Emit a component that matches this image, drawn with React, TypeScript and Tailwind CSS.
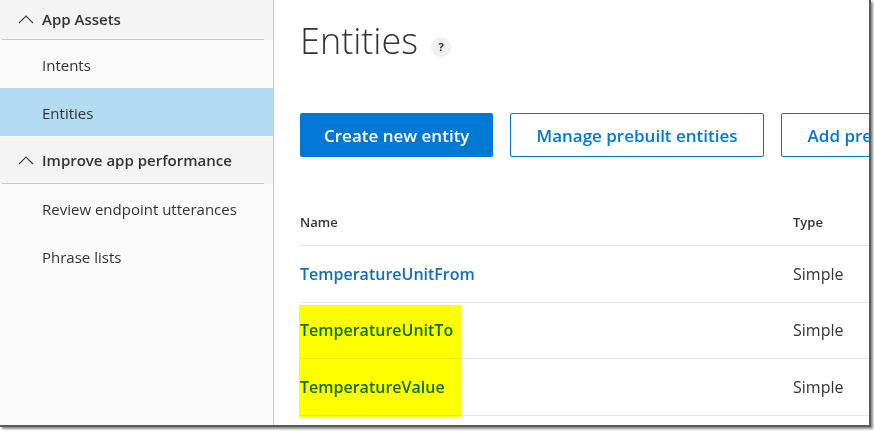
const sections = [
  {
    title: 'App Assets',
    headerClass: 'h-[40px]',
    items: [
      { label: 'Intents', active: false },
      { label: 'Entities', active: true },
    ],
  },
  {
    title: 'Improve app performance',
    headerClass: 'h-[47px]',
    items: [
      { label: 'Review endpoint utterances', active: false },
      { label: 'Phrase lists', active: false },
    ],
  },
];

const rows = [
  { name: 'TemperatureUnitFrom', type: 'Simple' },
  { name: 'TemperatureUnitTo', type: 'Simple' },
  { name: 'TemperatureValue', type: 'Simple' },
];

function Chevron() {
  return (
    <svg viewBox="0 0 16 9" aria-hidden="true" className="h-[9px] w-[16px] shrink-0">
      <path d="M1 8 8 1l7 7" fill="none" stroke="#444" strokeWidth="1.2" />
    </svg>
  );
}

function Sidebar() {
  return (
    <aside className="flex w-[274px] shrink-0 flex-col border-r border-[#c8c8c8] bg-[#fafafa]">
      {sections.map((section, i) => (
        <div key={section.title} className={i > 0 ? 'pt-[1px]' : ''}>
          <div className="bg-[#f4f4f4] pr-[9px]">
            <div
              className={`${section.headerClass} ml-[2px] flex items-center gap-[8px] border-b border-[#c8c8c8] pl-[16px] text-[15px] font-semibold text-[#333]`}
            >
              <Chevron />
              <span>{section.title}</span>
            </div>
          </div>
          {section.items.map((item) => (
            <div
              key={item.label}
              className={[
                'flex h-[48px] items-center pl-[42px] pt-[2px] text-[15px] text-[#333]',
                item.active ? 'bg-[#b3dbf1]' : '',
              ].join(' ')}
            >
              {item.label}
            </div>
          ))}
        </div>
      ))}
    </aside>
  );
}

export default function App() {
  return (
    <div className="h-[431px] w-[874px] overflow-hidden bg-white" style={{ fontFamily: '"Open Sans", "Noto Sans", sans-serif' }}>
      <div className="flex h-[427px] w-[871px] overflow-hidden border-r-[2px] border-b-[2px] border-[#5a5a5a] shadow-[2px_2px_2px_rgba(0,0,0,0.45)]">
        <Sidebar />

        <main className="relative min-w-0 flex-1 pl-[26px]">
          <div className="flex h-[84px] items-start gap-[13px] pt-[23px]">
            <h1 className="text-[36px] font-light leading-none text-[#333]">Entities</h1>
            <span className="mt-[14px] grid h-[20px] w-[20px] place-items-center rounded-full bg-[#f0f0f0] text-[11px] font-bold text-[#333]">
              ?
            </span>
          </div>

          <div className="mt-[29px] flex gap-[17px] whitespace-nowrap">
            <button className="h-[44px] shrink-0 rounded-[2px] bg-[#0078d4] px-[24px] pt-[2px] text-[17px] font-semibold text-white">
              Create new entity
            </button>
            <button className="h-[44px] shrink-0 rounded-[2px] border border-[#0078d4] bg-white px-[25px] pt-[2px] text-[17px] font-semibold text-[#0078d4]">
              Manage prebuilt entities
            </button>
            <button className="h-[44px] shrink-0 rounded-[2px] border border-[#0078d4] bg-white px-[26px] pt-[2px] text-[17px] font-semibold text-[#0078d4]">
              Add prebuilt domain entity
            </button>
          </div>

          <div className="mt-[56px]">
            <div className="flex h-[33px] items-start border-b border-[#e8e8e8] text-[13px] font-semibold text-[#333]">
              <span className="w-[493px]">Name</span>
              <span>Type</span>
            </div>
            {rows.map((row) => (
              <div key={row.name} className="flex h-[56.5px] items-center border-b border-[#e8e8e8]">
                <span className="w-[493px] text-[16px] font-semibold text-[#106ebe]">{row.name}</span>
                <span className="text-[16px] text-[#333]">{row.type}</span>
              </div>
            ))}
          </div>

          <div className="pointer-events-none absolute left-[25px] top-[305px] h-[112px] w-[162px] bg-[#ffff00] mix-blend-multiply" />
        </main>
      </div>
    </div>
  );
}
